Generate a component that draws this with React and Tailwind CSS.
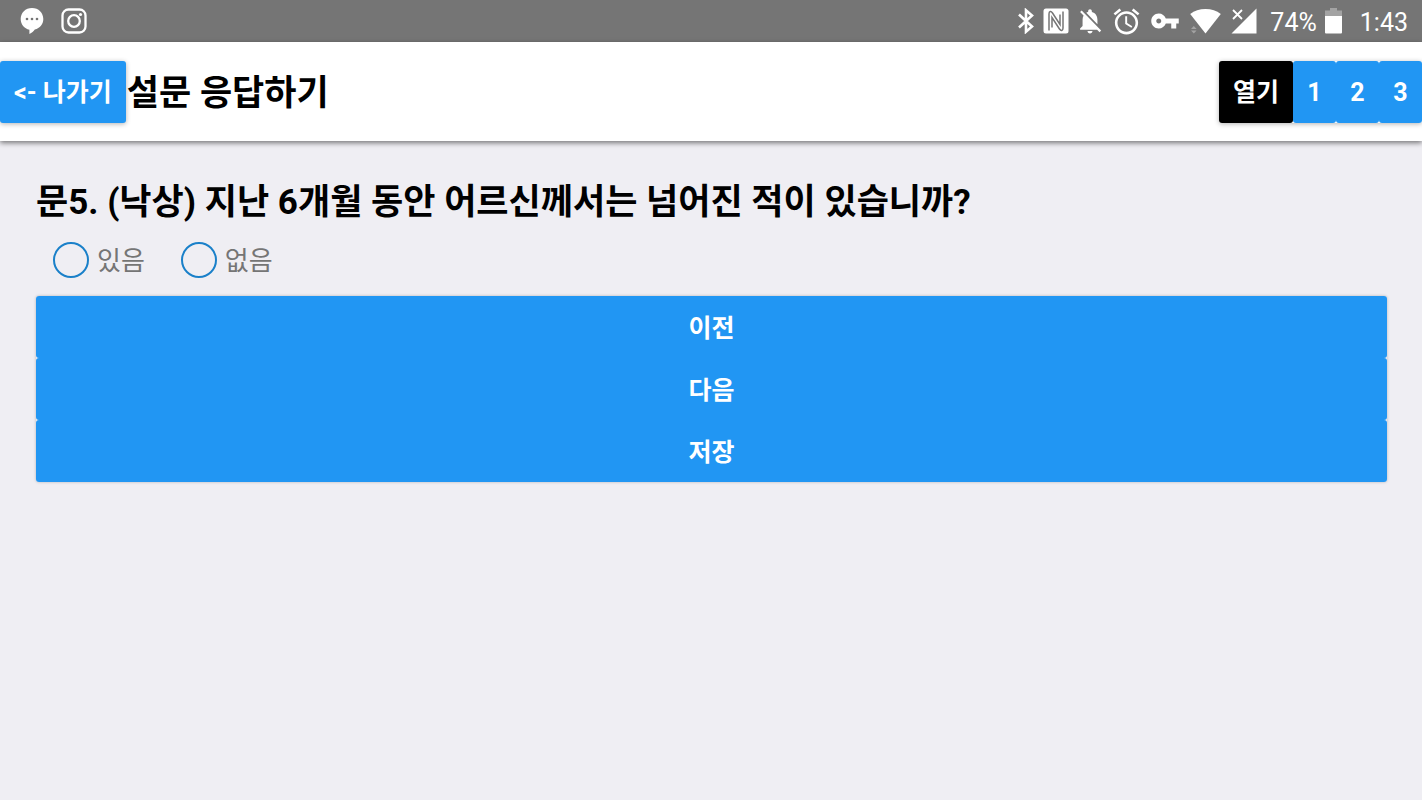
import { useState } from 'react'

const PAGES = ['1', '2', '3']
const OPTIONS = ['있음', '없음']
const ACTIONS = ['이전', '다음', '저장']

function StatusBar() {
  return (
    <div className="flex h-[42px] items-center justify-between bg-[#757575] pl-5 pr-[14px] text-[25px] leading-none text-white">
      <div className="flex items-center gap-[17px]">
        {/* Chat */}
        <svg width="24" height="28" viewBox="0 0 24 28" fill="currentColor">
          <path d="M12 1C5.400 1 .7 5.800 .7 12c0 5.300 3.600 9.500 8.700 10.800V27c2.500-1.100 4.300-2.700 5.400-4.400C19.900 21.300 23.300 17.200 23.300 12 23.300 5.800 18.600 1 12 1z" />
          <g fill="#757575">
            <circle cx="7" cy="12" r="1.300" />
            <circle cx="12" cy="12" r="1.300" />
            <circle cx="17" cy="12" r="1.300" />
          </g>
        </svg>
        {/* Camera */}
        <svg width="26" height="26" viewBox="0 0 26 26" fill="none" stroke="currentColor" strokeWidth="2.300">
          <rect x="1.500" y="1.500" width="23" height="23" rx="6" />
          <circle cx="13" cy="13" r="5.800" />
          <circle cx="19.500" cy="6.500" r="1.600" fill="currentColor" stroke="none" />
        </svg>
      </div>

      <div className="flex items-center gap-2">
        {/* Bluetooth */}
        <svg width="18" height="26" viewBox="0 0 18 26" fill="none" stroke="currentColor" strokeWidth="2.600">
          <path d="M2 6.500l13 12-6 5.200V2.300l6 5.200-13 12" />
        </svg>
        {/* NFC */}
        <svg width="26" height="26" viewBox="0 0 26 26">
          <rect x="0.500" y="0.500" width="25" height="25" rx="2.500" fill="currentColor" />
          <path
            d="M6 22.500V6c0-3 2-3.200 3.500-1L17 16.500V6.500M20 3.500V20c0 3-2 3.200-3.500 1L9 9.500v10"
            fill="none"
            stroke="#757575"
            strokeWidth="1.500"
          />
        </svg>
        {/* Muted bell */}
        <svg width="26" height="28" viewBox="1.500 1 21 22" fill="currentColor">
          <path d="M20 18.690L7.840 6.140 5.270 3.490 4 4.760l2.800 2.800v.01c-.52.990-.8 2.160-.8 3.420v5l-2 2v1h13.730l2 2L21 19.720l-1-1.030zM12 22c1.110 0 2-.890 2-2h-4c0 1.110.890 2 2 2zm6-7.320V11c0-3.080-1.640-5.640-4.500-6.320V4c0-.830-.670-1.500-1.500-1.500s-1.500.670-1.500 1.500v.680c-.150.030-.290.080-.420.120-.1.030-.2.070-.3.110h-.01c-.01 0-.01 0-.02.010-.230.090-.460.200-.680.310 0 0-.01 0-.01.010L18 14.680z" />
        </svg>
        {/* Alarm */}
        <svg width="31" height="31" viewBox="0 0 24 24" fill="currentColor">
          <path d="M22 5.720l-4.600-3.860-1.290 1.530 4.600 3.860L22 5.720zM7.880 3.390L6.600 1.860 2 5.710l1.290 1.530 4.590-3.850zM12.500 8H11v6l4.750 2.850.750-1.230-4-2.370V8zM12 4c-4.970 0-9 4.030-9 9s4.020 9 9 9c4.970 0 9-4.030 9-9s-4.030-9-9-9zm0 16c-3.870 0-7-3.130-7-7s3.130-7 7-7 7 3.130 7 7-3.130 7-7 7z" />
        </svg>
        {/* Key */}
        <svg width="30" height="30" viewBox="0 0 24 24" fill="currentColor">
          <path d="M12.650 10C11.830 7.670 9.610 6 7 6c-3.310 0-6 2.690-6 6s2.690 6 6 6c2.610 0 4.830-1.670 5.650-4H17v4h4v-4h2v-4H12.650zM7 14c-1.100 0-2-.900-2-2s.900-2 2-2 2 .9 2 2-.9 2-2 2z" />
        </svg>
        {/* Wi-Fi */}
        <svg width="34" height="26" viewBox="0 0 34 26">
          <path d="M17.500 25.500L2.200 6C6.500 2.700 11.500 1 17.500 1s11 1.700 15.300 5z" fill="currentColor" />
          <path d="M3 21l2.800-3 2.800 3zM3 22.500l2.800 3 2.800-3z" fill="#a3a3a3" />
        </svg>
        {/* Signal */}
        <svg width="28" height="26" viewBox="0 0 28 26">
          <path d="M26.500 .5v25h-25z" fill="currentColor" />
          <path d="M3 2l9 9M12 2l-9 9" stroke="currentColor" strokeWidth="1.800" />
        </svg>
        <span className="ml-1 pt-[2px]">74%</span>
        {/* Battery */}
        <svg width="17" height="26" viewBox="0 0 17 26">
          <path d="M5 0h7v2.500h5V9H0V2.500h5z" fill="#a3a3a3" />
          <path d="M0 8h17v16.500a1 1 0 0 1-1 1H1a1 1 0 0 1-1-1z" fill="currentColor" />
        </svg>
        <span className="ml-[10px] pt-[2px]">1:43</span>
      </div>
    </div>
  )
}

export default function App() {
  const [answer, setAnswer] = useState('')

  return (
    <div className="min-h-screen bg-[#efeef3] font-['Roboto','Noto_Sans_CJK_KR',sans-serif] text-black">
      <StatusBar />

      <header className="flex h-[99px] items-center justify-between bg-white shadow-[0_2px_5px_rgba(0,0,0,0.5)]">
        <div className="flex items-center gap-px">
          <button className="h-[62px] rounded-[3px] bg-[#2196f3] px-[14px] pt-[3px] text-[25px] font-bold text-white shadow-[0_1px_5px_rgba(0,0,0,0.3)]">
            &lt;- 나가기
          </button>
          <h1 className="pt-[5px] text-[35px] font-bold">설문 응답하기</h1>
        </div>
        <nav className="flex rounded-[3px] shadow-[0_1px_5px_rgba(0,0,0,0.3)]">
          <button className="h-[62px] rounded-[3px] bg-black px-[14px] pt-[3px] text-[25px] font-bold text-white">
            열기
          </button>
          {PAGES.map((page) => (
            <button
              key={page}
              className="h-[62px] min-w-[43px] rounded-[3px] bg-[#2196f3] pt-[3px] text-[25px] font-bold text-white"
            >
              {page}
            </button>
          ))}
        </nav>
      </header>

      <main className="pt-9 pr-[35px] pl-9">
        <h2 className="pt-[3px] text-[35px] leading-[45px] font-bold">
          문5. (낙상) 지난 6개월 동안 어르신께서는 넘어진 적이 있습니까?
        </h2>

        <div className="mt-[15px] flex gap-9 pl-[17px]">
          {OPTIONS.map((option) => (
            <label key={option} className="flex items-center gap-2 text-[26px] leading-9 text-[#757575]">
              <input
                type="radio"
                name="answer"
                value={option}
                checked={answer === option}
                onChange={() => setAnswer(option)}
                className="size-9 appearance-none rounded-full border-2 border-[#1a80c9] checked:bg-[#2196f3]"
              />
              <span className="pt-[3px]">{option}</span>
            </label>
          ))}
        </div>

        <div className="mt-[17px] flex flex-col rounded-[3px] shadow-[0_0_3px_rgba(0,0,0,0.25)]">
          {ACTIONS.map((action) => (
            <button
              key={action}
              className="h-[62px] rounded-[3px] bg-[#2196f3] pt-[3px] text-[25px] font-bold text-white"
            >
              {action}
            </button>
          ))}
        </div>
      </main>
    </div>
  )
}
